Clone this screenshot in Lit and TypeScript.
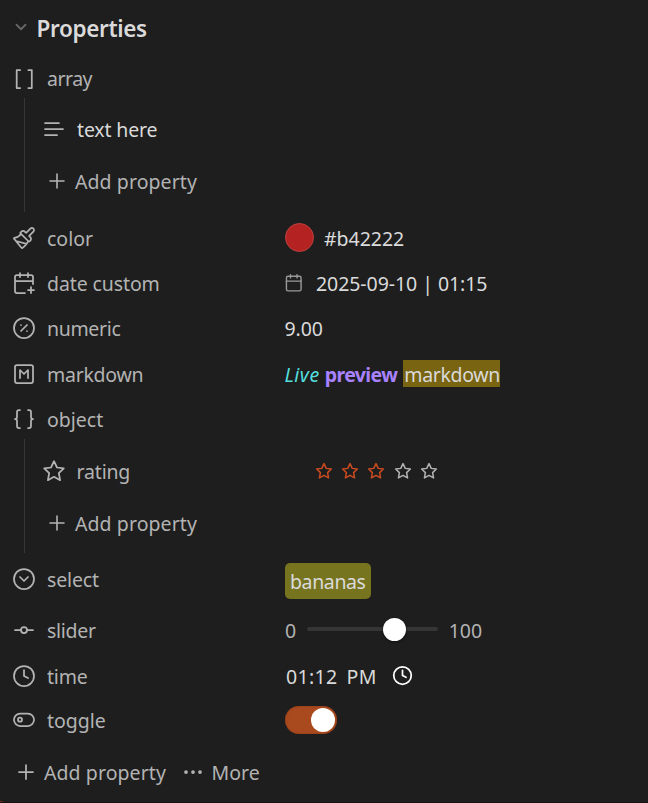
import { LitElement, html, css, svg, nothing } from "lit";
import { customElement, property } from "lit/decorators.js";

const ICONS: Record<string, unknown> = {
  chevron: svg`<path d="m6 9 6 6 6-6"/>`,
  array: svg`<path d="M16.3 3h3.5v18h-3.5M8.2 21H4.7V3h3.5"/>`,
  object: svg`<path d="M8 3H7a2 2 0 0 0-2 2v5a2 2 0 0 1-2 2 2 2 0 0 1 2 2v5a2 2 0 0 0 2 2h1M16 21h1a2 2 0 0 0 2-2v-5a2 2 0 0 1 2-2 2 2 0 0 1-2-2V5a2 2 0 0 0-2-2h-1"/>`,
  text: svg`<path d="M17 6.1H3M21 12.1H3M15.1 18H3"/>`,
  plus: svg`<path d="M5 12h14M12 5v14"/>`,
  dots: svg`<circle cx="12" cy="12" r="1"/><circle cx="19" cy="12" r="1"/><circle cx="5" cy="12" r="1"/>`,
  brush: svg`<path d="m14.6 17.9-10.7-2.9M18.4 2.6a2.1 2.1 0 0 1 3 3L17.4 9.6a.5.5 0 0 0 0 .7l.9.9a2.4 2.4 0 0 1 0 3.4l-.9.9a.5.5 0 0 1-.7 0L8.5 7.3a.5.5 0 0 1 0-.7l.9-.9a2.4 2.4 0 0 1 3.4 0l.9.9a.5.5 0 0 0 .7 0ZM9 8c-1.8 2.7-4 3.5-6.6 3.9a.5.5 0 0 0-.3.9l7.3 8.9a1 1 0 0 0 1.2.2C12.7 20.4 16 16.8 16 15"/>`,
  calendarPlus: svg`<path d="M8 2v4M16 2v4M21 13V6a2 2 0 0 0-2-2H5a2 2 0 0 0-2 2v14a2 2 0 0 0 2 2h8M3 10h18M16 19h6M19 16v6"/>`,
  calendar: svg`<rect x="3" y="4" width="18" height="18" rx="2"/><path d="M8 2v4M16 2v4M3 10h18"/>`,
  percent: svg`<circle cx="12" cy="12" r="10"/><path d="m15 9-6 6M9 9h.01M15 15h.01"/>`,
  markdown: svg`<rect x="3" y="3" width="18" height="18" rx="2"/><path d="M8 16V8l4 4 4-4v8"/>`,
  star: svg`<path d="M12 2.2 15 8.5 21.8 9.4 16.8 14.2 18.1 21.2 12 17.8 5.9 21.2 7.2 14.2 2.2 9.4 9 8.5Z"/>`,
  select: svg`<circle cx="12" cy="12" r="10"/><path d="m16 10-4 4-4-4"/>`,
  slider: svg`<circle cx="12" cy="12" r="3"/><path d="M3 12h6M15 12h6"/>`,
  clock: svg`<circle cx="12" cy="12" r="10"/><path d="M12 6v6l4 2"/>`,
  toggle: svg`<rect x="2" y="5.5" width="20" height="12.5" rx="6.2"/><circle cx="8" cy="11.7" r="2"/>`,
};

@customElement("line-icon")
class LineIcon extends LitElement {
  @property() name = "";
  static styles = css`
    :host { display: block; width: 24px; height: 24px; flex: none; }
    svg { display: block; width: 100%; height: 100%; fill: none; stroke: currentColor;
      stroke-width: var(--stroke, 1.75); stroke-linecap: round; stroke-linejoin: round; }
  `;
  render() {
    return html`<svg viewBox="0 0 24 24">${ICONS[this.name]}</svg>`;
  }
}

@customElement("property-row")
class PropertyRow extends LitElement {
  @property() icon = "";
  @property() label = "";
  static styles = css`
    :host { display: grid; grid-template-columns: 272.6px 1fr; align-items: center; padding-left: 12.4px; height: 45.4px; }
    .key { display: flex; align-items: center; gap: 10.6px; color: #b3b3b3; }
    .label { padding-top: var(--drop, 2px); letter-spacing: var(--track, 0); white-space: nowrap; }
    .value { display: flex; align-items: center; color: #dadada; white-space: nowrap; }
  `;
  render() {
    return html`
      <div class="key">
        <line-icon name=${this.icon}></line-icon>
        ${this.label ? html`<span class="label">${this.label}</span>` : nothing}
      </div>
      <div class="value"><slot></slot></div>`;
  }
}

@customElement("app-root")
class AppRoot extends LitElement {
  static styles = css`
    * { box-sizing: border-box; }
    :host { display: block; position: relative; height: 803px; box-sizing: border-box; overflow: hidden;
      background: #1e1e1e; border-bottom: 1px solid #1a1113;
      font: 19.5px/26px "Noto Sans", "Open Sans", sans-serif; color: #dadada; }
    .corner { position: absolute; left: 0; bottom: -1px; width: 4px; height: 2px; background: #7a3518; border-top-right-radius: 4px 2px; }
    .head { display: flex; align-items: center; height: 56px; padding-left: 12px; gap: 6.5px; }
    .head line-icon { width: 18px; height: 18px; color: #666; --stroke: 2.4; margin-top: -3px; }
    .title { font-size: 22.5px; line-height: 30px; font-weight: 600; letter-spacing: -0.35px; margin-top: 1px; }
    .nest { margin: -3px 0 3px 24px; border-left: 1px solid #363636; height: 114px; padding-top: 5px; }
    .nest.last { margin-bottom: 1px; padding-top: 6.4px; }
    .nest property-row { height: 52px; padding-left: 17px; }
    .add { display: flex; align-items: center; height: 52px; color: #b3b3b3; padding-left: 20px; gap: 6px; }
    .add line-icon { --stroke: 1.6; margin-top: -1px; }
    .add .t, .foot .t { letter-spacing: 0.08px; }
    .t { padding-top: 2px; }
    .line { color: #dadada; margin-left: -237.6px; letter-spacing: -0.15px; }
    .swatch { width: 29px; height: 29px; border-radius: 50%; background: #b42222; border: 1px solid #bd4040; margin-right: 10px; }
    .hex { letter-spacing: -0.03px; }
    .cal { width: 19.5px; height: 19.5px; color: #999; margin: 0 12.5px 0 -1px; }
    .date { letter-spacing: -0.06px; }
    .num { letter-spacing: -0.1px; margin-left: -0.5px; }
    .live { color: #53dfdd; font-style: italic; margin: 0 5px 0 -0.5px; letter-spacing: 0.5px; }
    .preview { color: #a882ff; font-weight: 700; letter-spacing: -0.6px; margin-right: 6px; }
    .mark { background: #786411; height: 27px; line-height: 29px; padding: 0 0 0 1px; width: 97px; letter-spacing: -0.35px; }
    .stars { display: flex; gap: 8.2px; margin-left: 0.4px; color: #b3b3b3; }
    .stars line-icon { width: 18px; height: 18px; --stroke: 2; }
    .stars .on { color: #cb4b21; }
    .tag { background: #777420; border-radius: 5px; height: 36px; line-height: 38px; padding: 0 5px; width: 86px; letter-spacing: -0.38px; margin-top: 4px; }
    .muted { color: #b3b3b3; }
    .slider { display: flex; align-items: center; width: 131px; height: 4px; border-radius: 2px; background: #363636; margin: -1px 11px 0 10.5px; }
    .thumb { width: 23px; height: 23px; flex: none; border-radius: 50%; background: #fff; box-shadow: 0 1px 3px #0008; margin-left: 76px; }
    .time { letter-spacing: 0.35px; word-spacing: 3.5px; padding-left: 1px; width: 107px; }
    .clock { width: 21px; height: 21px; color: #fff; --stroke: 2; }
    .toggle { display: flex; align-items: center; justify-content: flex-end; width: 52px; height: 28px; border-radius: 14px; background: #a9491e; padding-right: 2px; box-shadow: inset 0 0 2px #7a3518; }
    .knob { width: 24px; height: 24px; border-radius: 50%; background: #fff; }
    .foot { display: flex; align-items: center; height: 57px; color: #b3b3b3; padding-left: 14px; }
    .foot .t { margin-left: 6px; }
    .foot .dots { margin-left: 15.5px; }
    .foot .more { margin-left: 6px; }
    .array { --track: -0.5px; --drop: 1px; height: 45px; }
    .datec { --track: -0.1px; }
    .numeric { --track: -0.33px; }
    .md { --track: -0.25px; }
    .nest .rating { --track: -0.2px; }
    .select { --track: -0.15px; height: 50px; }
    .sl { --track: -0.27px; height: 52px; }
    .tm { --track: -0.2px; height: 39.6px; }
    .tg { height: 48.4px; }
  `;
  render() {
    const add = html`<div class="add"><line-icon name="plus"></line-icon><span class="t">Add property</span></div>`;
    return html`
      <div class="head"><line-icon name="chevron"></line-icon><span class="title">Properties</span></div>
      <property-row class="array" icon="array" label="array"></property-row>
      <div class="nest">
        <property-row icon="text"><span class="t line">text here</span></property-row>
        ${add}
      </div>
      <property-row icon="brush" label="color"><span class="swatch"></span><span class="t hex">#b42222</span></property-row>
      <property-row class="datec" icon="calendarPlus" label="date custom"><line-icon class="cal" name="calendar"></line-icon><span class="t date">2025-09-10 | 01:15</span></property-row>
      <property-row class="numeric" icon="percent" label="numeric"><span class="t num">9.00</span></property-row>
      <property-row class="md" icon="markdown" label="markdown"><span class="t live">Live</span><span class="t preview">preview</span><span class="mark">markdown</span></property-row>
      <property-row icon="object" label="object"></property-row>
      <div class="nest last">
        <property-row class="rating" icon="star" label="rating"><div class="stars">
          ${[1, 2, 3, 4, 5].map((n) => html`<line-icon name="star" class=${n <= 3 ? "on" : "off"}></line-icon>`)}
        </div></property-row>
        ${add}
      </div>
      <property-row class="select" icon="select" label="select"><span class="tag">bananas</span></property-row>
      <property-row class="sl" icon="slider" label="slider"><span class="t muted">0</span><div class="slider"><div class="thumb"></div></div><span class="t muted">100</span></property-row>
      <property-row class="tm" icon="clock" label="time"><span class="t time">01:12 PM</span><line-icon class="clock" name="clock"></line-icon></property-row>
      <property-row class="tg" icon="toggle" label="toggle"><div class="toggle"><div class="knob"></div></div></property-row>
      <div class="foot"><line-icon name="plus"></line-icon><span class="t">Add property</span><line-icon class="dots" name="dots"></line-icon><span class="t more">More</span></div>
      <div class="corner"></div>
    `;
  }
}
